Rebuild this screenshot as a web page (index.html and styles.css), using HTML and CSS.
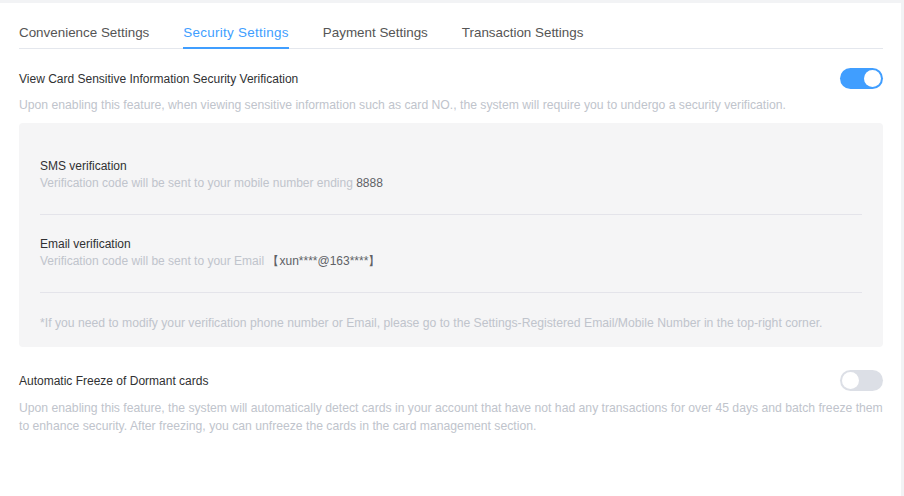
FILE: index.html
```html
<!DOCTYPE html>
<html lang="en">
<head>
    <meta charset="UTF-8">
    <meta name="viewport" content="width=device-width, initial-scale=1.0">
    <title>Security Settings</title>
    <link rel="stylesheet" href="styles.css">
</head>
<body>
<div class="panel">
    <div class="tabs">
        <div class="tab">Convenience Settings</div>
        <div class="tab active">Security Settings</div>
        <div class="tab">Payment Settings</div>
        <div class="tab">Transaction Settings</div>
    </div>

    <div class="setting">
        <div class="setting-head">
            <span class="setting-title">View Card Sensitive Information Security Verification</span>
            <span class="switch on"></span>
        </div>
        <p class="setting-desc">Upon enabling this feature, when viewing sensitive information such as card NO., the system will require you to undergo a security verification.</p>

        <div class="verify-box">
            <div class="verify-item">
                <div class="verify-title">SMS verification</div>
                <div class="verify-sub">Verification code will be sent to your mobile number ending <span class="value">8888</span></div>
            </div>
            <div class="verify-item">
                <div class="verify-title">Email verification</div>
                <div class="verify-sub">Verification code will be sent to your Email <span class="value">【xun****@163****】</span></div>
            </div>
            <p class="verify-note">*If you need to modify your verification phone number or Email, please go to the Settings-Registered Email/Mobile Number in the top-right corner.</p>
        </div>
    </div>

    <div class="setting second">
        <div class="setting-head">
            <span class="setting-title">Automatic Freeze of Dormant cards</span>
            <span class="switch"></span>
        </div>
        <p class="setting-desc">Upon enabling this feature, the system will automatically detect cards in your account that have not had any transactions for over 45 days and batch freeze them to enhance security. After freezing, you can unfreeze the cards in the card management section.</p>
    </div>
</div>
</body>
</html>
```

FILE: styles.css
```css
body {
    margin: 0;
    padding: 3px 3px 0 0;
    background-color: #f2f3f5;
    font-family: "Liberation Sans", Arial, sans-serif;
    font-size: 12px;
    color: #303133;
}
.panel {
    background-color: #fff;
    min-height: 493px;
    padding: 0 18px 0 19px;
    box-sizing: border-box;
}

.tabs {
    display: flex;
    gap: 34px;
    padding-top: 14px;
    border-bottom: 1px solid #e4e7ed;
}
.tab {
    position: relative;
    height: 31px;
    line-height: 31px;
    font-size: 13.4px;
    color: #555;
}
.tab.active {
    color: #409eff;
    letter-spacing: 0.3px;
}
.tab.active::after {
    content: "";
    position: absolute;
    left: 0;
    right: 0;
    bottom: -1px;
    height: 2px;
    background-color: #409eff;
}

.setting {
    margin-top: 19px;
}
.setting.second {
    margin-top: 23px;
}
.setting-head {
    display: flex;
    justify-content: space-between;
    align-items: center;
    height: 21px;
}
.setting-title {
    color: #303133;
}
.setting-desc {
    margin: 7px 0 0;
    font-size: 12.2px;
    line-height: 18px;
    color: #c0c4cc;
}
.second .setting-desc {
    margin-top: 8px;
}

.switch {
    position: relative;
    width: 43px;
    height: 21px;
    border-radius: 11px;
    background-color: #dcdfe6;
}
.switch::after {
    content: "";
    position: absolute;
    top: 2px;
    left: 2px;
    width: 17px;
    height: 17px;
    border-radius: 50%;
    background-color: #fff;
}
.switch.on {
    background-color: #409eff;
}
.switch.on::after {
    left: auto;
    right: 2px;
}

.verify-box {
    margin-top: 9px;
    padding: 14px 21px 15px;
    background-color: #f5f5f6;
    border-radius: 4px;
}
.verify-item {
    padding: 21px 0 22px;
    border-bottom: 1px solid #e4e4ea;
    line-height: 17px;
}
.verify-title {
    color: #303133;
}
.verify-sub {
    color: #c0c4cc;
}
.verify-sub .value {
    color: #606266;
}
.verify-note {
    margin: 21px 0 0;
    font-size: 12.2px;
    line-height: 18px;
    color: #c0c4cc;
}
```
